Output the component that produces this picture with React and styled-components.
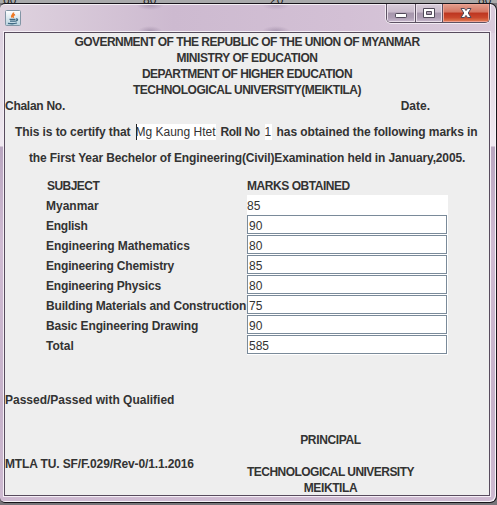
import React from "react";
import styled, { createGlobalStyle } from "styled-components";

const GlobalStyle = createGlobalStyle`
  * { box-sizing: border-box; }
  html, body { margin: 0; overflow: hidden; }
  body { background: #77757a; font-family: "Liberation Sans", Arial, sans-serif; font-size: 12px; color: #333; }
`;

const Desktop = styled.div`
  width: 497px;
  height: 505px;
  overflow: hidden;
  display: flex;
  flex-direction: column;
  background: linear-gradient(#a9aaab 0 3px, #77757a 3px);
`;

const BackgroundAxis = styled.div`
  height: 3px;
  flex: none;
  overflow: hidden;
  display: grid;
  grid-template-columns: 140px 127px 208px 1fr;
  padding-left: 3px;
  font-size: 12px;
  line-height: 0;
  color: #222;
`;

const Window = styled.div`
  height: 500px;
  flex: none;
  border: solid #17141a;
  border-width: 1px 1px 1px 0;
  border-radius: 5px 7px 7px 5px;
  display: flex;
  flex-direction: column;
  padding: 0 1px 1px 0;
  background:
    radial-gradient(ellipse 14px 5px at 150px 1px, #78658466, transparent),
    radial-gradient(ellipse 14px 5px at 276px 1px, #78658444, transparent),
    radial-gradient(ellipse 14px 5px at 276px 27px, #78658466, transparent),
    radial-gradient(ellipse 12px 5px at 150px 27px, #78658466, transparent),
    linear-gradient(to right, #dfd3df, #cdbad0 35%, #d3c0d5 70%, #d9cadb) 0 0 / 100% 29px no-repeat,
    linear-gradient(#d8cbdc, #e8e0e9 100px, #f0e9f1 142px, #b9a6c0 143px, #cfbbd2 240px, #c6b2ca 400px, #cebad1);
  box-shadow: inset 0 1px #f4eff5, inset -1px -1px #f8f4f9;
`;

const TitleBar = styled.div`
  height: 28px;
  flex: none;
  display: flex;
  justify-content: space-between;
  align-items: flex-start;
  padding: 0 5px 0 5px;
`;

const JavaIcon = styled.svg`
  width: 16px;
  height: 16px;
  margin-top: 6px;
`;

const Controls = styled.div`
  display: flex;
  height: 19px;
  border: 1px solid #5d5263;
  border-top: 0;
  border-radius: 0 0 5px 5px;
  overflow: hidden;
  box-shadow: 0 1px 0 #f2ebf3, 1px 0 0 #f2ebf3, -1px 0 0 #f2ebf3;
`;

const ControlButton = styled.button`
  width: ${(p) => p.$width}px;
  height: 18px;
  padding: 0;
  border: 0;
  border-left: ${(p) => (p.$divider ? "1px solid #5d5263" : 0)};
  box-shadow: inset 0 0 0 1px ${(p) => (p.$close ? "#efa292" : "#e9dfea")};
  background: ${(p) =>
    p.$close
      ? "linear-gradient(#e3a08f, #d47562 45%, #bd3520 50%, #c9472c 75%, #e48158)"
      : "linear-gradient(#d8cdd9, #c9bbcc 45%, #a696ac 50%, #ad9db3 75%, #c8b9ce)"};

  svg { display: block; margin: auto; }
`;

const Client = styled.main`
  flex: none;
  height: 464px;
  margin-left: 4px;
  width: 486px;
  border: 1px solid #574b5d;
  box-shadow: 0 0 0 1px #f5eff6;
  background: #eee;
  display: flex;
  flex-direction: column;
`;

const Text = styled.span`
  display: block;
  height: 16px;
  line-height: 16px;
  white-space: pre;
  font-weight: ${(p) => (p.$regular ? 400 : 700)};
  letter-spacing: ${(p) => p.$track || 0}px;
`;

const Heading = styled.header`
  display: flex;
  flex-direction: column;
  align-items: center;
  padding-top: 1px;
`;

const Reference = styled.div`
  display: flex;
  justify-content: space-between;
  padding-right: 59px;
`;

const CertifyLine = styled.div`
  display: flex;
  height: 16px;
  margin-top: 10px;
  padding-left: 10px;
`;

const InlineField = styled.div`
  height: 16px;
  width: ${(p) => p.$width}px;
  margin: 0 5px;
  background: #fff;
  box-shadow: ${(p) => (p.$caret ? "inset 1px 0 #222" : "none")};
`;

const ExamLine = styled.div`
  margin-top: 10px;
  padding-left: 24px;
`;

const MarksTable = styled.div`
  display: grid;
  grid-template-columns: 201px 201px;
  grid-template-rows: 17px;
  grid-auto-rows: 20px;
  margin: 12px 0 0 41px;
`;

const ColumnTitle = styled.div`
  padding-left: ${(p) => p.$inset || 0}px;
`;

const Subject = styled.div`
  padding-top: 3px;
`;

const MarkField = styled.div`
  height: 20px;
  padding: 3px 0 0 ${(p) => (p.$plain ? 0 : 2)}px;
  border: ${(p) => (p.$plain ? "0 solid" : "1px solid #fff")};
  border-width: ${(p) => (p.$plain ? 0 : "0 1px 1px 0")};
  box-shadow: inset 0 0 0 ${(p) => (p.$plain ? 0 : 1)}px #7a8a99;
  background: #fff;
`;

const Result = styled.div`
  margin-top: 37px;
`;

const Footer = styled.footer`
  display: grid;
  grid-template-columns: 242px 167px;
  margin-top: 24px;
`;

const FormNumber = styled.div`
  padding-top: 24px;
`;

const Signature = styled.div`
  display: flex;
  flex-direction: column;
  align-items: center;
`;

const Institution = styled.div`
  margin-top: 16px;
  display: flex;
  flex-direction: column;
  align-items: center;
`;

const headings = [
  ["GOVERNMENT OF THE REPUBLIC OF THE UNION OF MYANMAR", -0.54],
  ["MINISTRY OF EDUCATION", -0.44],
  ["DEPARTMENT OF HIGHER EDUCATION", -0.54],
  ["TECHNOLOGICAL UNIVERSITY(MEIKTILA)", -0.48],
];

const marks = [
  ["Myanmar", "85", 0],
  ["English", "90", -0.25],
  ["Engineering Mathematics", "80", -0.07],
  ["Engineering Chemistry", "85", -0.16],
  ["Engineering Physics", "80", -0.16],
  ["Building Materials and Construction", "75", -0.17],
  ["Basic Engineering Drawing", "90", -0.13],
  ["Total", "585", 0],
];

export default function App() {
  return (
    <>
      <GlobalStyle />
      <Desktop>
        <BackgroundAxis><span>60</span><span>80</span><span>20</span><span>80</span></BackgroundAxis>
        <Window>
          <TitleBar>
            <JavaIcon viewBox="0 0 16 16">
              <defs>
                <linearGradient id="tile" x2="0" y2="1">
                  <stop stopColor="#fff" /><stop offset="1" stopColor="#b7d2df" />
                </linearGradient>
              </defs>
              <rect x=".5" y=".5" width="15" height="15" rx="1" fill="url(#tile)" stroke="#8295a5" />
              <path d="M8.500 2.500C9 4 5.500 5 7 7.500M10 4.500C8 5.500 7.500 6 8.600 7.800" fill="none" stroke="#ed7824" strokeWidth="1.5" />
              <path d="M4.500 9.300h6M5 11.200h5M3 13.300q5 1 9-.3M11 9q2.500-.3 1 1.600-.7.6-1.800.7" fill="none" stroke="#3f6a84" strokeWidth="1.3" />
            </JavaIcon>
            <Controls>
              <ControlButton $width={28} aria-label="Minimize">
                <svg width="14" height="14" viewBox="0 0 14 14"><rect x="1.500" y="7.500" width="11" height="4" rx=".7" fill="#fff" stroke="#514a59" /></svg>
              </ControlButton>
              <ControlButton $width={27} $divider aria-label="Maximize">
                <svg width="14" height="14" viewBox="0 0 14 14"><path d="M1.500 2.500h11v9h-11zM4.500 5.500v3h5v-3z" fill="#fff" fillRule="evenodd" stroke="#514a59" /></svg>
              </ControlButton>
              <ControlButton $width={47} $divider $close aria-label="Close">
                <svg width="14" height="14" viewBox="0 0 14 14"><path d="M2 2.500h3.500L7 4.600l1.500-2.100H12L9.200 7l2.800 4.500H8.500L7 9.400 5.500 11.500H2L4.800 7z" fill="#fff" stroke="#514a59" /></svg>
              </ControlButton>
            </Controls>
          </TitleBar>
          <Client>
            <Heading>
              {headings.map(([label, track]) => <Text key={label} $track={track}>{label}</Text>)}
            </Heading>
            <Reference><Text $track={-0.27}>Chalan No.</Text><Text>Date.</Text></Reference>
            <CertifyLine>
              <Text $track={-0.08}>This is to certify that</Text>
              <InlineField $width={80} $caret><Text $regular>Mg Kaung Htet</Text></InlineField>
              <Text $track={-0.42}>Roll No</Text>
              <InlineField $width={7}><Text $regular>1</Text></InlineField>
              <Text $track={-0.09}>has obtained the following marks in</Text>
            </CertifyLine>
            <ExamLine><Text $track={-0.13}>the First Year Bechelor of Engineering(Civil)Examination held in January,2005.</Text></ExamLine>
            <MarksTable>
              <ColumnTitle $inset={1}><Text $track={-0.55}>SUBJECT</Text></ColumnTitle>
              <ColumnTitle><Text $track={-0.45}>MARKS OBTAINED</Text></ColumnTitle>
              {marks.map(([subject, mark, track], i) => (
                <React.Fragment key={subject}>
                  <Subject><Text $track={track}>{subject}</Text></Subject>
                  <MarkField $plain={i === 0}><Text $regular>{mark}</Text></MarkField>
                </React.Fragment>
              ))}
            </MarksTable>
            <Result><Text>Passed/Passed with Qualified</Text></Result>
            <Footer>
              <FormNumber><Text $track={-0.13}>MTLA TU. SF/F.029/Rev-0/1.1.2016</Text></FormNumber>
              <Signature>
                <Text $track={-0.35}>PRINCIPAL</Text>
                <Institution>
                  <Text $track={-0.54}>TECHNOLOGICAL UNIVERSITY</Text>
                  <Text $track={-0.4}>MEIKTILA</Text>
                </Institution>
              </Signature>
            </Footer>
          </Client>
        </Window>
      </Desktop>
    </>
  );
}
